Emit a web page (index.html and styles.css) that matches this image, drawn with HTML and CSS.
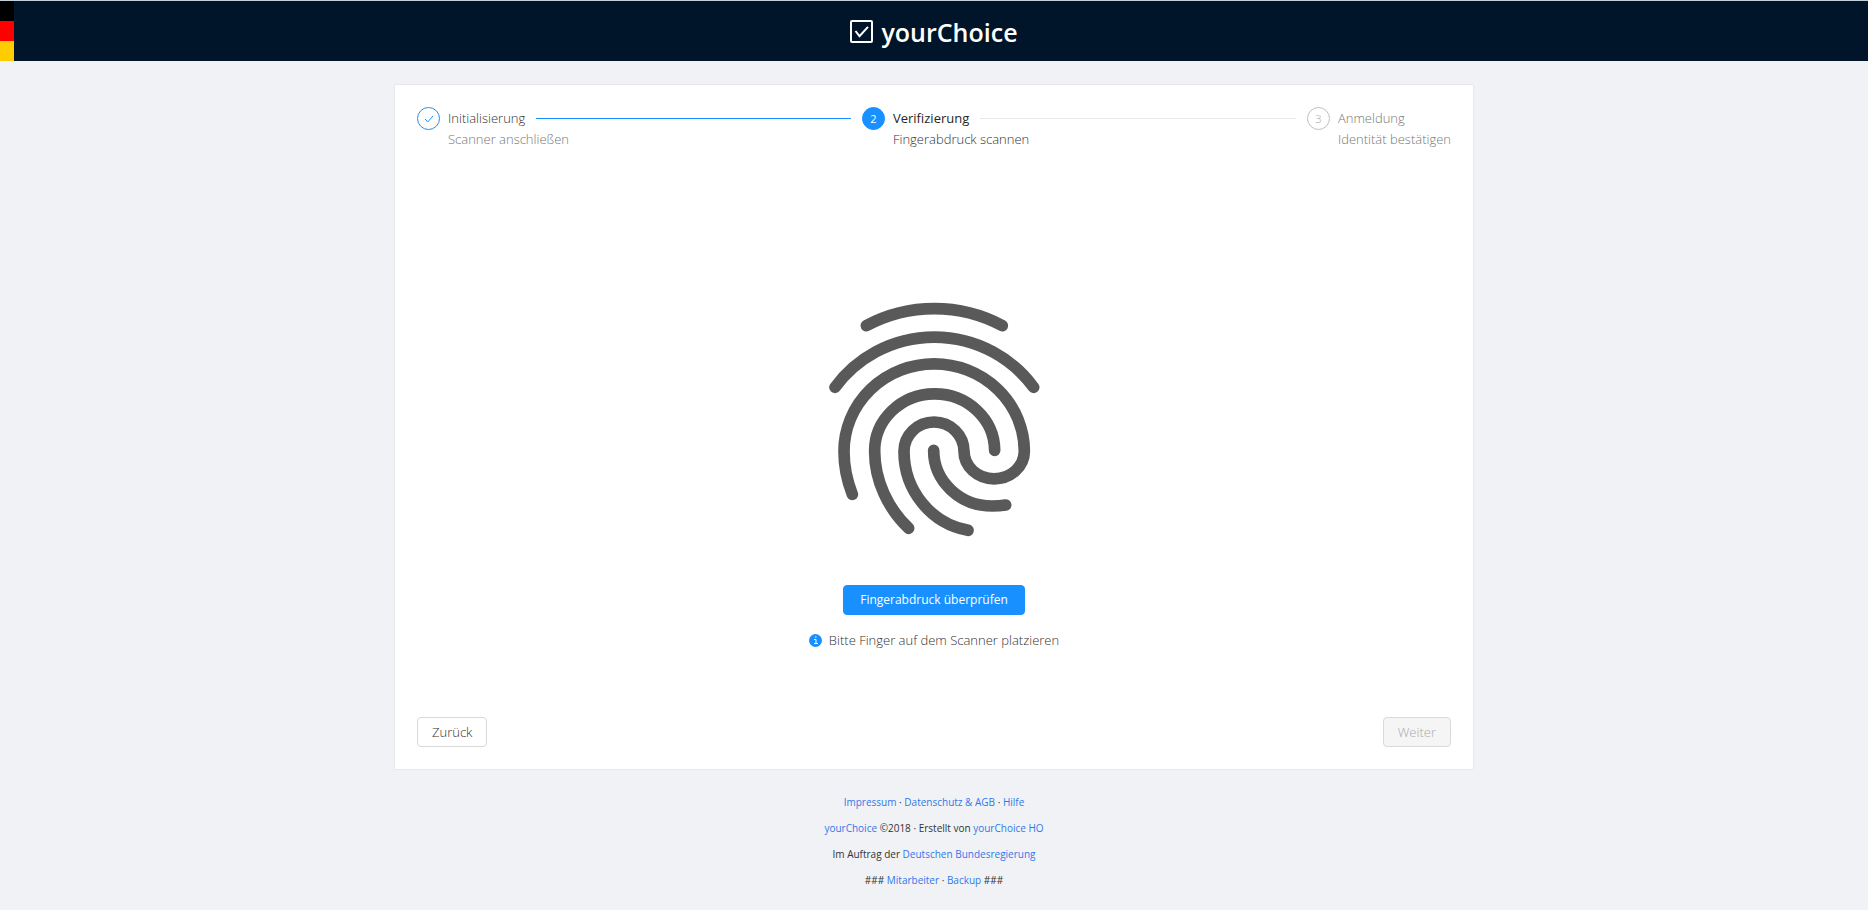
FILE: index.html
```html
<!DOCTYPE html>
<html lang="de">
<head>
<meta charset="utf-8">
<title>yourChoice</title>
<link rel="stylesheet" href="styles.css">
</head>
<body>
<header class="header">
  <div class="flag"><span class="flag-black"></span><span class="flag-red"></span><span class="flag-gold"></span></div>
  <div class="brand">
    <svg class="brand-icon" viewBox="0 0 23 23" aria-hidden="true"><rect x="1" y="1" width="21" height="21" rx="1"/><path d="M5.500 11l4 5.200L18 6.800"/></svg>
    <span>yourChoice</span>
  </div>
</header>
<main class="card">
  <ol class="steps">
    <li class="step step-done">
      <span class="step-icon"><svg class="tick" viewBox="0 0 10 8" aria-hidden="true"><path d="M1 4l2.700 3L9 1"/></svg></span>
      <div class="step-body">
        <div class="step-title">Initialisierung</div>
        <div class="step-text">Scanner anschließen</div>
      </div>
    </li>
    <li class="step step-active">
      <span class="step-icon">2</span>
      <div class="step-body">
        <div class="step-title">Verifizierung</div>
        <div class="step-text">Fingerabdruck scannen</div>
      </div>
    </li>
    <li class="step step-wait">
      <span class="step-icon">3</span>
      <div class="step-body">
        <div class="step-title">Anmeldung</div>
        <div class="step-text">Identität bestätigen</div>
      </div>
    </li>
  </ol>
  <section class="scan">
    <svg class="fingerprint" viewBox="-4 0 750 780" aria-hidden="true">
      <path d="M168 107A433 433 0 0 1 576 107"/>
      <path d="M74 292A370 370 0 0 1 670 292"/>
      <path d="M126 613Q101 550 101 484A270 262 0 0 1 642 484A90 82 0 0 1 461 484A90 88 0 0 0 281 484C281 600 360 700 473 721"/>
      <path d="M553 481A180 171 0 0 0 193 484C193 570 232 655 295 715"/>
      <path d="M370 481C370 575 450 648 545 648Q567 648 586 645"/>
    </svg>
    <button class="btn btn-primary" type="button">Fingerabdruck überprüfen</button>
    <p class="hint">
      <svg class="info" viewBox="0 0 13 13" aria-hidden="true"><circle cx="6.500" cy="6.500" r="6.500"/><path d="M6 3h1.500M5 5.500h2v4M5 9.500h4"/></svg>
      Bitte Finger auf dem Scanner platzieren
    </p>
  </section>
  <div class="actions">
    <button class="btn" type="button">Zurück</button>
    <button class="btn" type="button" disabled>Weiter</button>
  </div>
</main>
<footer class="footer">
  <p><a href="#">Impressum</a> · <a href="#">Datenschutz &amp; AGB</a> · <a href="#">Hilfe</a></p>
  <p><a href="#">yourChoice</a> ©2018 · Erstellt von <a href="#">yourChoice HO</a></p>
  <p>Im Auftrag der <a href="#">Deutschen Bundesregierung</a></p>
  <p>### <a href="#">Mitarbeiter</a> · <a href="#">Backup</a> ###</p>
</footer>
</body>
</html>
```
FILE: styles.css
```css
* { box-sizing: border-box; }
body {
  min-height: 100vh;
  margin: 0;
  background: #f0f2f5;
  color: #333;
  font: 300 13px/20px "Open Sans", "Noto Sans", sans-serif;
}
.header {
  position: relative;
  display: flex;
  align-items: center;
  justify-content: center;
  height: 61px;
  border-top: 1px solid #c3d0d8;
  background: #001529;
}
.flag {
  position: absolute;
  inset: 0 auto 0 0;
  width: 14px;
  display: grid;
  grid-template-rows: repeat(3, 1fr);
}
.flag-black { background: #000; }
.flag-red { background: #f00; }
.flag-gold { background: #fc0; }
.brand {
  display: flex;
  align-items: center;
  gap: 8px;
  padding-top: 1px;
  color: #fff;
  font-size: 25px;
  line-height: 36px;
  font-weight: 600;
}
.brand-icon { width: 23px; height: 23px; fill: none; stroke: #fff; stroke-width: 2; }
.card {
  max-width: 1080px;
  margin: 23px auto 0;
  padding: 22px;
  border: 1px solid #e6e8eb;
  border-radius: 2px;
  background: #fff;
}
.steps { display: flex; gap: 11px; margin: 0; padding: 0; list-style: none; }
.step { display: flex; flex: 1; gap: 8px; }
.step:last-child { flex: none; }
.step-icon {
  display: flex;
  align-items: center;
  justify-content: center;
  flex: none;
  width: 23px;
  height: 23px;
  border: 1px solid #1890ff;
  border-radius: 50%;
  font-size: 11px;
}
.tick { width: 10px; height: 8px; fill: none; stroke: #1890ff; }
.step-body { flex: 1; }
.step-title { display: flex; align-items: center; gap: 11px; line-height: 23px; }
.step:not(:last-child) .step-title::after { content: ""; flex: 1; height: 1px; background: #e8e8e8; }
.step.step-done .step-title::after { background: #1890ff; }
.step-text { line-height: 18px; }
.step-done .step-text { color: #777; }
.step-active .step-icon { background: #1890ff; color: #fff; font-weight: 400; }
.step-active .step-title { color: #262626; font-weight: 400; }
.step-wait { color: #777; }
.step-wait .step-icon { border-color: #bfbfbf; color: #aaa; }
.scan { display: flex; flex-direction: column; align-items: center; padding-top: 142px; }
.fingerprint {
  width: 250px;
  height: 260px;
  margin-bottom: 35px;
  fill: none;
  stroke: #595959;
  stroke-width: 35;
  stroke-linecap: round;
}
.btn {
  height: 30px;
  padding: 0 14px;
  border: 1px solid #d9d9d9;
  border-radius: 4px;
  background: #fff;
  color: #333;
  font: inherit;
}
.btn:disabled { background: #f5f5f5; color: #aaa; }
.btn-primary {
  padding: 0 16px;
  border-color: #1890ff;
  background: #1890ff;
  color: #fff;
  font-size: 12px;
  font-weight: 400;
}
.hint { display: flex; align-items: center; gap: 7px; margin: 15px 0 0; }
.info { width: 13px; height: 13px; fill: #1890ff; }
.info path { fill: none; stroke: #fff; }
.actions { display: flex; justify-content: space-between; margin-top: 67px; }
.footer { margin-top: 23px; font-size: 10px; font-weight: 400; line-height: 18px; text-align: center; }
.footer p { margin: 0 0 8px; }
.footer a { color: #3078ea; text-decoration: none; }
```
